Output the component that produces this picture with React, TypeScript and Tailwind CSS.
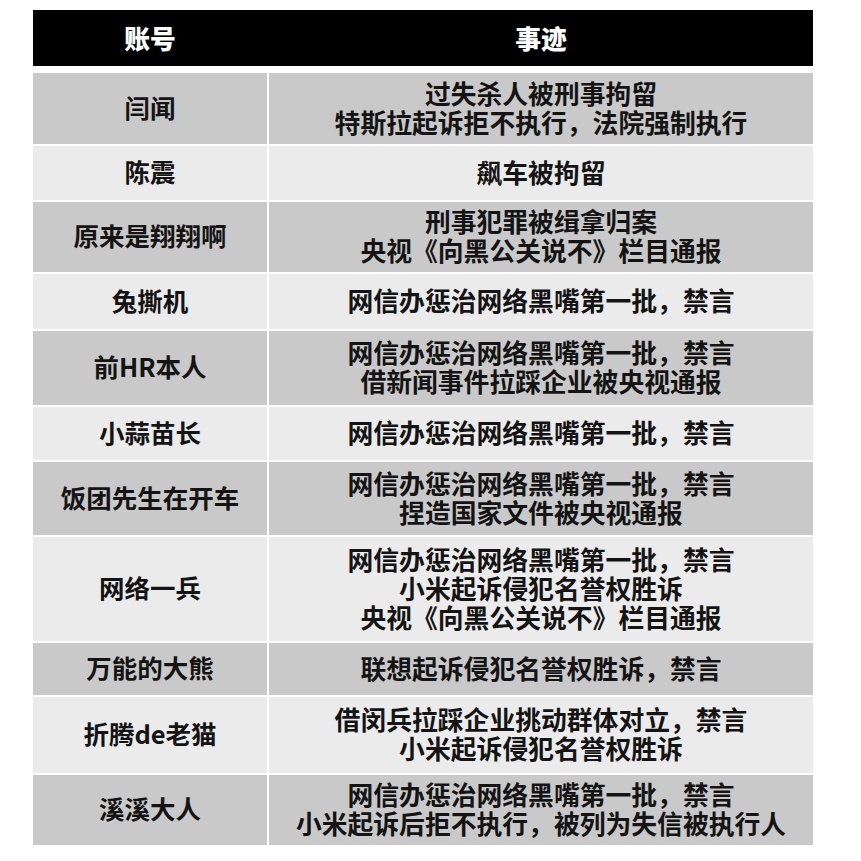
import React from 'react';

type Row = { account: string; events: string[]; h: number; dark: boolean };

const rows: Row[] = [
    { account: '闫闻', events: ['过失杀人被刑事拘留', '特斯拉起诉拒不执行，法院强制执行'], h: 71, dark: true },
    { account: '陈震', events: ['飙车被拘留'], h: 54, dark: false },
    { account: '原来是翔翔啊', events: ['刑事犯罪被缉拿归案', '央视《向黑公关说不》栏目通报'], h: 70, dark: true },
    { account: '兔撕机', events: ['网信办惩治网络黑嘴第一批，禁言'], h: 55, dark: false },
    { account: '前HR本人', events: ['网信办惩治网络黑嘴第一批，禁言', '借新闻事件拉踩企业被央视通报'], h: 74, dark: true },
    { account: '小蒜苗长', events: ['网信办惩治网络黑嘴第一批，禁言'], h: 53, dark: false },
    { account: '饭团先生在开车', events: ['网信办惩治网络黑嘴第一批，禁言', '捏造国家文件被央视通报'], h: 73, dark: true },
    {
        account: '网络一兵',
        events: ['网信办惩治网络黑嘴第一批，禁言', '小米起诉侵犯名誉权胜诉', '央视《向黑公关说不》栏目通报'],
        h: 104,
        dark: false,
    },
    { account: '万能的大熊', events: ['联想起诉侵犯名誉权胜诉，禁言'], h: 52, dark: true },
    { account: '折腾de老猫', events: ['借闵兵拉踩企业挑动群体对立，禁言', '小米起诉侵犯名誉权胜诉'], h: 76, dark: false },
    { account: '溪溪大人', events: ['网信办惩治网络黑嘴第一批，禁言', '小米起诉后拒不执行，被列为失信被执行人'], h: 70, dark: true },
];

export default function App() {
    return (
        <div
            className="w-[861px] h-[861px] bg-white pt-[10px] pl-[33px] overflow-hidden"
            style={{ fontFamily: '"Noto Sans CJK SC", "Noto Sans", sans-serif' }}
        >
            <div className="w-[780px] flex flex-col gap-[2px]">
                {/* Header */}
                <div className="grid grid-cols-[234px_544px] gap-x-[2px] h-[56px] bg-black mb-[5px]">
                    <div className="flex items-center justify-center bg-black text-white text-[25.8px] font-black">
                        账号
                    </div>
                    <div className="flex items-center justify-center bg-black text-white text-[25.8px] font-black">
                        事迹
                    </div>
                </div>
                {/* Rows */}
                {rows.map(row => (
                    <div
                        key={row.account}
                        className="grid grid-cols-[234px_544px] gap-x-[2px]"
                        style={{ height: row.h }}
                    >
                        <div
                            className={`flex items-center justify-center pb-[3px] text-[25.5px] font-bold text-[#141414] ${
                                row.dark ? 'bg-[#c9c9c9]' : 'bg-[#ebebeb]'
                            }`}
                        >
                            {row.account}
                        </div>
                        <div
                            className={`flex flex-col items-center justify-center pb-[4px] text-[25.8px] leading-[29px] font-bold text-[#141414] ${
                                row.dark ? 'bg-[#c9c9c9]' : 'bg-[#ebebeb]'
                            }`}
                        >
                            {row.events.map(line => (
                                <span key={line} className="whitespace-nowrap">
                                    {line}
                                </span>
                            ))}
                        </div>
                    </div>
                ))}
            </div>
        </div>
    );
}
